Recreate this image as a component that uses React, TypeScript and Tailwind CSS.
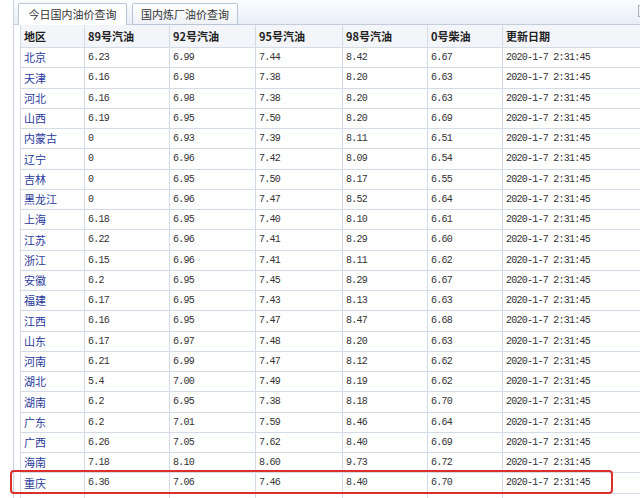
const rows: [string, string, string, string, string, string][] = [
  ["北京", "6.23", "6.99", "7.44", "8.42", "6.67"],
  ["天津", "6.16", "6.98", "7.38", "8.20", "6.63"],
  ["河北", "6.16", "6.98", "7.38", "8.20", "6.63"],
  ["山西", "6.19", "6.95", "7.50", "8.20", "6.69"],
  ["内蒙古", "0", "6.93", "7.39", "8.11", "6.51"],
  ["辽宁", "0", "6.96", "7.42", "8.09", "6.54"],
  ["吉林", "0", "6.95", "7.50", "8.17", "6.55"],
  ["黑龙江", "0", "6.96", "7.47", "8.52", "6.64"],
  ["上海", "6.18", "6.95", "7.40", "8.10", "6.61"],
  ["江苏", "6.22", "6.96", "7.41", "8.29", "6.60"],
  ["浙江", "6.15", "6.96", "7.41", "8.11", "6.62"],
  ["安徽", "6.2", "6.95", "7.45", "8.29", "6.67"],
  ["福建", "6.17", "6.95", "7.43", "8.13", "6.63"],
  ["江西", "6.16", "6.95", "7.47", "8.47", "6.68"],
  ["山东", "6.17", "6.97", "7.48", "8.20", "6.63"],
  ["河南", "6.21", "6.99", "7.47", "8.12", "6.62"],
  ["湖北", "5.4", "7.00", "7.49", "8.19", "6.62"],
  ["湖南", "6.2", "6.95", "7.38", "8.18", "6.70"],
  ["广东", "6.2", "7.01", "7.59", "8.46", "6.64"],
  ["广西", "6.26", "7.05", "7.62", "8.40", "6.69"],
  ["海南", "7.18", "8.10", "8.60", "9.73", "6.72"],
  ["重庆", "6.36", "7.06", "7.46", "8.40", "6.70"],
];

const headers = ["地区", "89号汽油", "92号汽油", "95号汽油", "98号汽油", "0号柴油", "更新日期"];
const cols = "grid grid-cols-[64px_85px_86px_87px_85px_75px_200px]";
const cell = "border-r border-b border-[#d3dbe6] pl-[3px] flex items-center";
const cjk = "font-['Noto_Sans_CJK_SC',sans-serif]";
const mono = "font-['Liberation_Mono',monospace] text-[10px] tracking-[-0.75px] text-[#333]";

const App = () => {
  return (
    <div className={`relative h-[498px] w-[640px] overflow-hidden bg-white ${cjk}`}>
      <div className="ml-[13px] h-full border-l border-[#c9d2de]">
        <div className="flex h-[25px] items-end gap-[5px] border-b border-[#c3cddb] bg-gradient-to-b from-[#fbfcfe] to-[#e8eef6] pl-[4px]">
          <div className="-mb-px flex h-[22px] w-[109px] items-center justify-center rounded-t-[2px] border border-b-0 border-[#b9c5d5] bg-white text-[11px] text-[#333]">
            今日国内油价查询
          </div>
          <div className="-mb-px flex h-[22px] w-[106px] items-center justify-center rounded-t-[2px] border border-[#b9c5d5] bg-gradient-to-b from-white to-[#eef2f8] text-[11px] text-[#333]">
            国内炼厂油价查询
          </div>
          <div className="mb-[7px] ml-auto flex h-[12px] w-[30px] shrink-0 translate-x-[28px] items-center border border-[#a9b3c0] bg-[#f2f2f2] pl-[3px] text-[9px] leading-none text-[#333]">
            更多
          </div>
        </div>
        <div className="pl-[6px]">
          <div className="w-[690px] border-l border-[#d3dbe6]">
            <div className={`${cols} h-[23px] bg-[#f3f5f9]`}>
              {headers.map((h) => (
                <div key={h} className={`${cell} text-[11px] font-bold text-[#222]`}>
                  {h}
                </div>
              ))}
            </div>
            {rows.map((r) => (
              <div key={r[0]} className={`${cols} h-[20.25px]`}>
                <div className={`${cell} text-[11px] text-[#2a3a9c]`}>{r[0]}</div>
                {r.slice(1).map((v, i) => (
                  <div key={i} className={`${cell} ${mono}`}>
                    {v}
                  </div>
                ))}
                <div className={`${cell} ${mono}`}>2020-1-7 2:31:45</div>
              </div>
            ))}
            <div className={`${cols} h-[20px]`}>
              {headers.map((h) => (
                <div key={h} className={cell} />
              ))}
            </div>
          </div>
        </div>
      </div>
      <div className="pointer-events-none absolute left-[10px] top-[470px] h-[24px] w-[603px] rounded-[4px] border-2 border-[#d9302c]" />
    </div>
  );
};

export default App;
